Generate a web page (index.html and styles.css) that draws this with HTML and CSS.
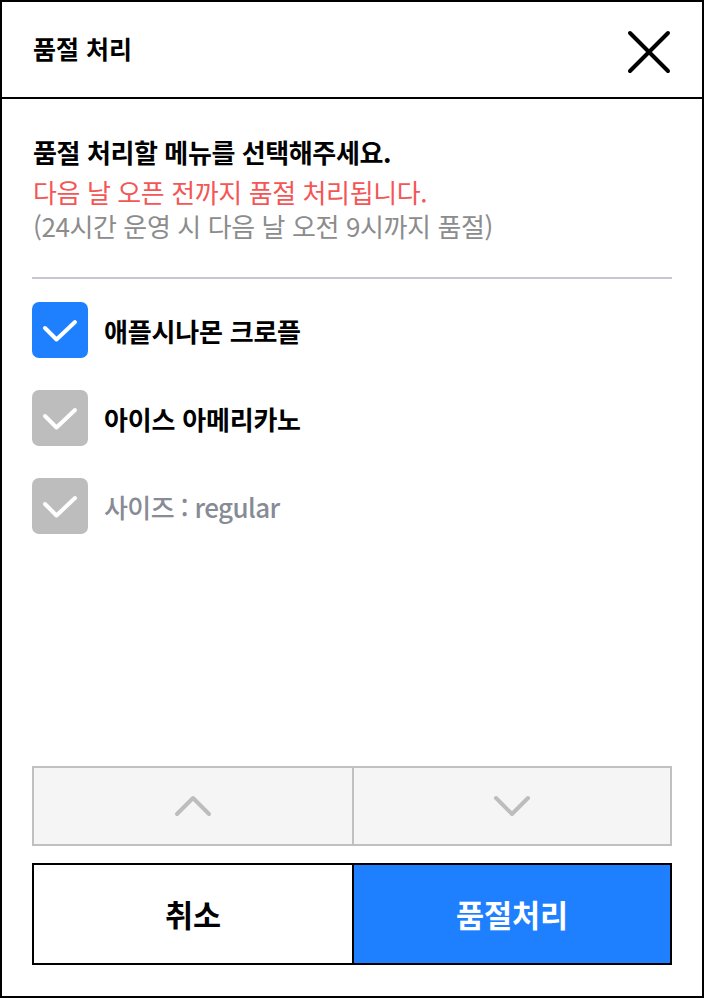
FILE: index.html
```html
<!DOCTYPE html>
<html lang="ko">
<head>
  <meta charset="UTF-8">
  <meta name="viewport" content="width=device-width, initial-scale=1.0">
  <title>품절 처리</title>
  <link rel="stylesheet" href="styles.css">
</head>
<body>
  <div class="popup">
    <!-- Header -->
    <div class="popup-header">
      <h1 class="popup-title">품절 처리</h1>
      <button class="close-button" aria-label="닫기">
        <svg width="46" height="46" viewBox="0 0 46 46">
          <path d="M4 4 L42 42 M42 4 L4 42" stroke="#000" stroke-width="4" stroke-linecap="round" fill="none"/>
        </svg>
      </button>
    </div>

    <div class="popup-body">
      <div class="notice">
        <p class="notice-main">품절 처리할 메뉴를 선택해주세요.</p>
        <p class="notice-red">다음 날 오픈 전까지 품절 처리됩니다.</p>
        <p class="notice-gray">(24시간 운영 시 다음 날 오전 9시까지 품절)</p>
      </div>

      <!-- Menu list -->
      <ul class="menu-list">
        <li class="menu-item">
          <span class="check checked">
            <svg width="56" height="56" viewBox="0 0 56 56"><path d="M13 26 L24.5 37.5 L43 20" stroke="#fff" stroke-width="4" stroke-linecap="round" stroke-linejoin="round" fill="none"/></svg>
          </span>
          <span class="menu-name">애플시나몬 크로플</span>
        </li>
        <li class="menu-item">
          <span class="check">
            <svg width="56" height="56" viewBox="0 0 56 56"><path d="M13 26 L24.5 37.5 L43 20" stroke="#fff" stroke-width="4" stroke-linecap="round" stroke-linejoin="round" fill="none"/></svg>
          </span>
          <span class="menu-name">아이스 아메리카노</span>
        </li>
        <li class="menu-item">
          <span class="check">
            <svg width="56" height="56" viewBox="0 0 56 56"><path d="M13 26 L24.5 37.5 L43 20" stroke="#fff" stroke-width="4" stroke-linecap="round" stroke-linejoin="round" fill="none"/></svg>
          </span>
          <span class="menu-name option">사이즈 : regular</span>
        </li>
      </ul>

      <!-- Paging -->
      <div class="pager">
        <button class="pager-button">
          <svg width="40" height="24" viewBox="0 0 40 24"><path d="M4 20 L20 4 L36 20" stroke="#bdbdbd" stroke-width="4" stroke-linecap="round" stroke-linejoin="round" fill="none"/></svg>
        </button>
        <button class="pager-button">
          <svg width="40" height="24" viewBox="0 0 40 24"><path d="M4 4 L20 20 L36 4" stroke="#bdbdbd" stroke-width="4" stroke-linecap="round" stroke-linejoin="round" fill="none"/></svg>
        </button>
      </div>

      <div class="actions">
        <button class="action-button cancel">취소</button>
        <button class="action-button confirm">품절처리</button>
      </div>
    </div>
  </div>
</body>
</html>
```

FILE: styles.css
```css
body {
  margin: 0;
  font-family: "Noto Sans CJK KR", "Noto Sans", sans-serif;
  background-color: #fff;
}
.popup {
  width: 704px;
  height: 998px;
  box-sizing: border-box;
  border: 2px solid #000;
  display: flex;
  flex-direction: column;
}
.popup-header {
  height: 97px;
  box-sizing: border-box;
  border-bottom: 2px solid #000;
  display: flex;
  align-items: center;
  justify-content: space-between;
  padding: 0 30px 0 31px;
}
.popup-title {
  margin: 0 0 4px 0;
  font-size: 25px;
  font-weight: 700;
  color: #000;
  letter-spacing: 0;
}
.close-button {
  border: none;
  background: none;
  padding: 0;
  width: 46px;
  height: 46px;
  margin-top: 4px;
  cursor: pointer;
}
.close-button svg {
  display: block;
}
.popup-body {
  flex: 1;
  display: flex;
  flex-direction: column;
  padding: 36px 30px 31px 30px;
}
.notice {
  padding-left: 1px;
  border-bottom: 2px solid #c5c8d0;
  padding-bottom: 34px;
}
.notice p {
  margin: 0;
  font-size: 26px;
  line-height: 34px;
  letter-spacing: -0.4px;
}
.notice-main {
  font-weight: 700;
  color: #000;
  margin-bottom: 6px !important;
}
.notice-red {
  color: #f45656;
}
.notice-gray {
  color: #8c8c8c;
}
.menu-list {
  list-style: none;
  margin: 23px 0 0 0;
  padding: 0;
  display: flex;
  flex-direction: column;
  gap: 32px;
}
.menu-item {
  display: flex;
  align-items: center;
  gap: 16px;
}
.check {
  width: 56px;
  height: 56px;
  border-radius: 7px;
  background-color: #bdbdbd;
  display: block;
}
.check svg {
  display: block;
}
.check.checked {
  background-color: #1e7fff;
}
.menu-name {
  font-size: 26px;
  font-weight: 700;
  color: #000;
  letter-spacing: -0.2px;
}
.menu-name.option {
  font-weight: 500;
  color: #878b96;
  letter-spacing: -0.6px;
}
.pager {
  margin-top: auto;
  display: grid;
  grid-template-columns: 320px 1fr;
  height: 80px;
  box-sizing: border-box;
  border: 2px solid #c0c0c0;
  background-color: #f5f5f5;
}
.pager-button {
  border: none;
  background: none;
  padding: 0;
  display: flex;
  align-items: center;
  justify-content: center;
  cursor: pointer;
}
.pager-button:first-child {
  border-right: 2px solid #c0c0c0;
}
.actions {
  margin-top: 17px;
  display: grid;
  grid-template-columns: 320px 1fr;
  height: 102px;
  box-sizing: border-box;
  border: 2px solid #000;
}
.action-button {
  border: none;
  padding: 0;
  font-family: "Noto Sans CJK KR", "Noto Sans", sans-serif;
  font-size: 30.5px;
  font-weight: 700;
  letter-spacing: 0;
  cursor: pointer;
}
.action-button.cancel {
  background-color: #fff;
  color: #000;
  border-right: 2px solid #000;
}
.action-button.confirm {
  background-color: #1e7fff;
  color: #fff;
}
```
